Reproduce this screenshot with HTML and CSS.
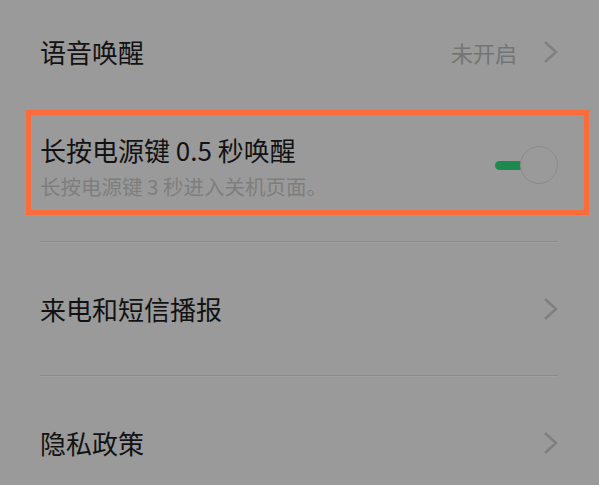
FILE: index.html
```html
<!DOCTYPE html>
<html lang="zh-CN">
<head>
<meta charset="utf-8">
<link rel="stylesheet" href="styles.css">
</head>
<body>
<div class="page">
  <div class="row row-first">
    <span class="label">语音唤醒</span>
    <span class="right">
      <span class="value">未开启</span>
      <svg class="chev" width="16" height="24" viewBox="0 0 16 24"><polyline points="2,2 13,12 2,22" fill="none" stroke="#7f7f7f" stroke-width="2.4" stroke-linejoin="miter"/></svg>
    </span>
  </div>
  <div class="row row-toggle">
    <div class="texts">
      <div class="label">长按电源键 0.5 秒唤醒</div>
      <div class="sub">长按电源键 3 秒进入关机页面。</div>
    </div>
    <div class="toggle"><span class="bar"></span><span class="knob"></span></div>
  </div>
  <div class="sep"></div>
  <div class="row row-tall">
    <span class="label">来电和短信播报</span>
    <svg class="chev" width="16" height="24" viewBox="0 0 16 24"><polyline points="2,2 13,12 2,22" fill="none" stroke="#7f7f7f" stroke-width="2.4"/></svg>
  </div>
  <div class="sep"></div>
  <div class="row row-tall">
    <span class="label">隐私政策</span>
    <svg class="chev" width="16" height="24" viewBox="0 0 16 24"><polyline points="2,2 13,12 2,22" fill="none" stroke="#7f7f7f" stroke-width="2.4"/></svg>
  </div>
  <div class="highlight"></div>
</div>
</body>
</html>
```
FILE: styles.css
```css
html, body {
  margin: 0;
  padding: 0;
  background: #9a9a9a;
  height: 100%;
  overflow: hidden;
}
.page {
  position: relative;
  padding: 0 41px 0 40px;
  font-family: "Noto Sans CJK SC", "Noto Sans", sans-serif;
  color: #111;
}
.row {
  display: flex;
  align-items: center;
  justify-content: space-between;
}
.row-first {
  height: 103px;
}
.label {
  font-size: 26px;
  line-height: 34px;
  color: #121212;
}
.right {
  display: flex;
  align-items: center;
  gap: 26px;
}
.value {
  font-size: 22px;
  color: #747474;
  line-height: 30px;
}
.chev {
  display: block;
  margin-right: -1px;
}
.row-toggle {
  padding: 30px 0 41px;
}
.texts {
  display: flex;
  flex-direction: column;
  gap: 5px;
}
.sub {
  font-size: 20.5px;
  line-height: 28px;
  color: #7e7e7e;
}
.toggle {
  position: relative;
  width: 63px;
  height: 38px;
  margin-top: -4px;
}
.bar {
  position: absolute;
  left: 0;
  top: 15px;
  width: 28px;
  height: 9px;
  border-radius: 5px;
  background: #1c8a4e;
}
.knob {
  position: absolute;
  right: 0;
  top: 0;
  width: 38px;
  height: 38px;
  box-sizing: border-box;
  border-radius: 50%;
  border: 1.5px solid #8a8a8a;
  background: #9a9a9a;
}
.sep {
  height: 1px;
  background: #8b8b8b;
  box-shadow: 0 1px 0 #a0a0a0;
}
.row-tall {
  height: 133px;
}
.highlight {
  position: absolute;
  left: 26px;
  top: 110px;
  width: 563px;
  height: 105px;
  box-sizing: border-box;
  border: 5.5px solid #fb6c3a;
}
```
